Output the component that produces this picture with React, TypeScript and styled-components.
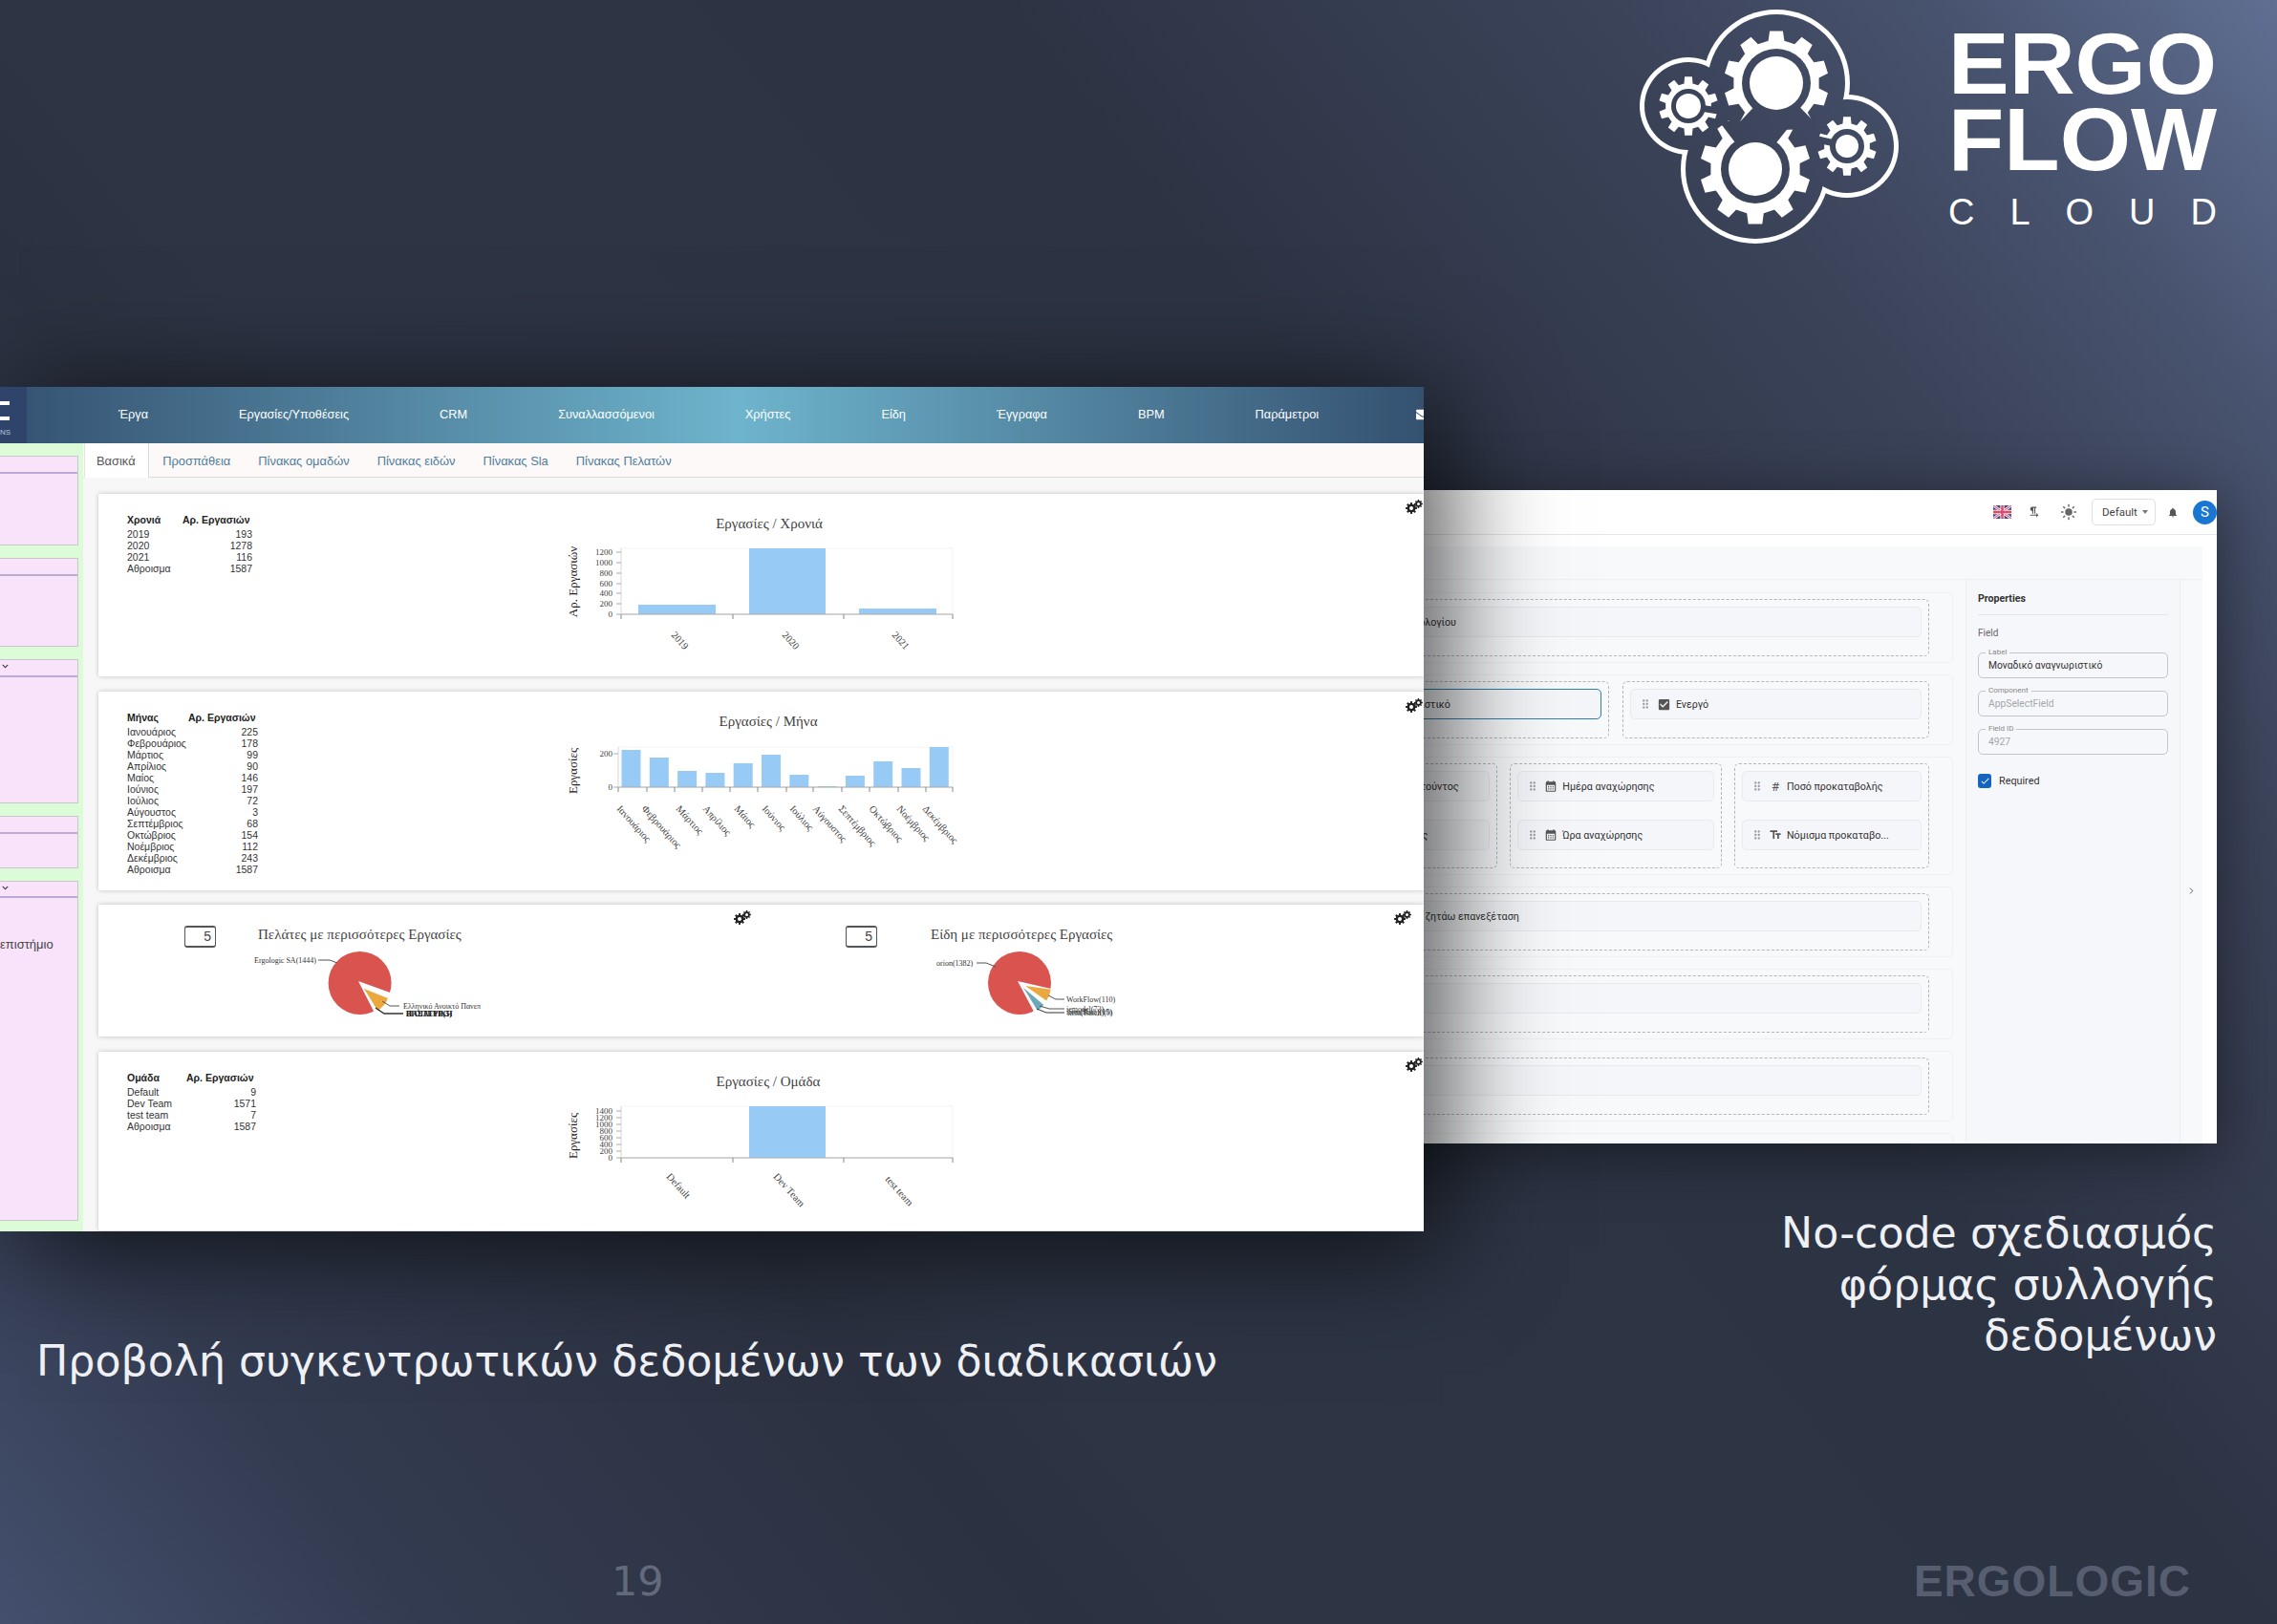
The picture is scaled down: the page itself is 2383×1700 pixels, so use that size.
import React, { FC } from 'react';
import styled, { createGlobalStyle } from 'styled-components';
import { ChevronRight, Sun } from 'lucide-react';
import { FaChevronDown, FaEnvelope } from 'react-icons/fa';
import {
  MdCalendarMonth,
  MdCheck,
  MdCheckBox,
  MdDragIndicator,
  MdFormatTextdirectionLToR,
  MdNotifications,
  MdTextFields,
} from 'react-icons/md';

const Global = createGlobalStyle`
  html, body { margin: 0; padding: 0; background: #2a3040; }
  * { box-sizing: border-box; }
`;

const gearPath = (cx: number, cy: number, outer: number, root: number, teeth: number) => {
  const step = (Math.PI * 2) / teeth;
  const pts: string[] = [];
  for (let i = 0; i < teeth; i++) {
    const a = i * step - Math.PI / 2;
    const at = (r: number, d: number) =>
      `${(cx + r * Math.cos(a + d * step)).toFixed(1)} ${(cy + r * Math.sin(a + d * step)).toFixed(1)}`;
    pts.push(at(root, -0.3), at(outer, -0.2), at(outer, 0.2), at(root, 0.3));
  }
  return `M${pts.join('L')}Z`;
};

const wedge = (cx: number, cy: number, r: number, a0: number, a1: number) => {
  const p = (a: number) =>
    `${(cx + r * Math.cos((a * Math.PI) / 180)).toFixed(1)} ${(cy + r * Math.sin((a * Math.PI) / 180)).toFixed(1)}`;
  return `M${cx} ${cy}L${p(a0)}A${r} ${r} 0 0 1 ${p(a1)}Z`;
};

const BLOBS = [
  { x: 179, y: 87, r: 77 },
  { x: 157, y: 177, r: 78 },
  { x: 87, y: 111, r: 51 },
  { x: 253, y: 153, r: 54 },
];

const Logo: FC = () => (
  <LogoSvg viewBox="0 0 640 270">
    <defs>
      <mask id="ring">
        {BLOBS.map((b) => (
          <circle key={b.x} cx={b.x} cy={b.y} r={b.r} fill="#fff" />
        ))}
        {BLOBS.map((b) => (
          <circle key={b.x} cx={b.x} cy={b.y} r={b.r - 5} fill="#000" />
        ))}
      </mask>
      <mask id="gears">
        <rect width="640" height="270" fill="#000" />
        <path d={gearPath(179, 87, 55, 45, 10)} fill="#fff" />
        <path d={gearPath(157, 177, 58, 47, 10)} fill="#fff" />
        <path d={gearPath(87, 111, 31, 24, 10)} fill="#fff" />
        <path d={gearPath(253, 153, 31, 24, 10)} fill="#fff" />
        <circle cx="179" cy="87" r="36" fill="#000" />
        <circle cx="157" cy="177" r="36" fill="#000" />
        <circle cx="87" cy="111" r="18" fill="#000" />
        <circle cx="253" cy="153" r="18" fill="#000" />
        <polygon points="179,87 132,137 226,135" fill="#000" />
        <polygon points="157,177 119,127 197,127" fill="#000" />
        <line x1="87" y1="111" x2="130" y2="118" stroke="#000" strokeWidth="7" />
        <line x1="253" y1="153" x2="205" y2="142" stroke="#000" strokeWidth="7" />
      </mask>
    </defs>
    <rect width="640" height="270" fill="#fff" mask="url(#ring)" />
    <rect width="640" height="270" fill="#fff" mask="url(#gears)" />
    <circle cx="179" cy="87" r="28" fill="#fff" />
    <circle cx="157" cy="177" r="28" fill="#fff" />
    <circle cx="87" cy="111" r="13" fill="#fff" />
    <circle cx="253" cy="153" r="12" fill="#fff" />
    <LogoWord x="359" y="98" fontSize="91" textLength="281" lengthAdjust="spacingAndGlyphs">
      ERGO
    </LogoWord>
    <LogoWord x="359" y="178" fontSize="93" textLength="281" lengthAdjust="spacingAndGlyphs">
      FLOW
    </LogoWord>
    <LogoSub x="359" y="235" fontSize="38" textLength="281" lengthAdjust="spacing">
      CLOUD
    </LogoSub>
  </LogoSvg>
);

interface IChart {
  top: number;
  height: number;
  title: string;
  titleX: number;
  titleY: number;
  axisLabel: string;
  axisLabelY: number;
  plotTop: number;
  plotBottom: number;
  plotLeft: number;
  yTicks: { text: string; y: number }[];
  xTicks: number[];
  bars: { x: number; w: number; top: number }[];
  xLabels: { text: string; x: number; y: number }[];
}

const Chart: FC<{ data: IChart }> = ({ data }) => (
  <ChartSvg
    width={460}
    height={data.height}
    viewBox={`580 ${data.top} 460 ${data.height}`}
  >
    <ChartTitle x={data.titleX} y={data.titleY} textAnchor="middle">
      {data.title}
    </ChartTitle>
    <AxisTitle
      x={600}
      y={data.axisLabelY}
      textAnchor="middle"
      transform={`rotate(-90 604 ${data.axisLabelY})`}
    >
      {data.axisLabel}
    </AxisTitle>
    <rect
      x={data.plotLeft}
      y={data.plotTop}
      width={997 - data.plotLeft}
      height={data.plotBottom - data.plotTop}
      fill="#fff"
      stroke="#f3f3f3"
    />
    {data.bars.map((b) => (
      <rect key={b.x} x={b.x} y={b.top} width={b.w} height={data.plotBottom - b.top} fill="#97cbf5" />
    ))}
    <line x1={data.plotLeft} y1={data.plotBottom} x2={997} y2={data.plotBottom} stroke="#aaa" />
    <line x1={data.plotLeft} y1={data.plotTop} x2={data.plotLeft} y2={data.plotBottom} stroke="#ddd" />
    {data.xTicks.map((x) => (
      <line key={x} x1={x} y1={data.plotBottom} x2={x} y2={data.plotBottom + 5} stroke="#888" />
    ))}
    {data.yTicks.map((t) => (
      <g key={t.text}>
        <line x1={data.plotLeft - 5} y1={t.y} x2={data.plotLeft} y2={t.y} stroke="#aaa" />
        <TickText x={641} y={t.y + 3} textAnchor="end">
          {t.text}
        </TickText>
      </g>
    ))}
    {data.xLabels.map((l) => (
      <TickLabel key={l.text} x={l.x} y={l.y} transform={`rotate(48 ${l.x} ${l.y})`}>
        {l.text}
      </TickLabel>
    ))}
  </ChartSvg>
);

const MONTH_TOPS = [784, 792, 806, 808, 798, 789, 810, 822, 811, 796, 803, 781];
const MONTH_NAMES = [
  ['Ιανουάριος', 645],
  ['Φεβρουάριος', 671],
  ['Μάρτιος', 707],
  ['Απρίλιος', 735],
  ['Μάιος', 768],
  ['Ιούνιος', 797],
  ['Ιούλιος', 826],
  ['Αύγουστος', 850],
  ['Σεπτέμβριος', 877],
  ['Οκτώβριος', 909],
  ['Νοέμβριος', 938],
  ['Δεκέμβριος', 965],
] as const;

const yearChart: IChart = {
  top: 517,
  height: 191,
  title: 'Εργασίες / Χρονιά',
  titleX: 805,
  titleY: 553,
  axisLabel: 'Αρ. Εργασιών',
  axisLabelY: 605,
  plotTop: 574,
  plotBottom: 643,
  plotLeft: 650,
  yTicks: [
    { text: '1200', y: 578 },
    { text: '1000', y: 589 },
    { text: '800', y: 600 },
    { text: '600', y: 611 },
    { text: '400', y: 621 },
    { text: '200', y: 632 },
    { text: '0', y: 643 },
  ],
  xTicks: [650, 767, 883, 997],
  bars: [
    { x: 668, w: 81, top: 633 },
    { x: 784, w: 80, top: 574 },
    { x: 899, w: 81, top: 637 },
  ],
  xLabels: [
    { text: '2019', x: 702, y: 665 },
    { text: '2020', x: 818, y: 665 },
    { text: '2021', x: 933, y: 665 },
  ],
};

const monthChart: IChart = {
  top: 723,
  height: 208,
  title: 'Εργασίες / Μήνα',
  titleX: 804,
  titleY: 759,
  axisLabel: 'Εργασίες',
  axisLabelY: 802,
  plotTop: 781,
  plotBottom: 823,
  plotLeft: 647,
  yTicks: [
    { text: '200', y: 788 },
    { text: '0', y: 823 },
  ],
  xTicks: [647, 677, 706, 735, 764, 793, 823, 851, 881, 910, 940, 969, 997],
  bars: MONTH_TOPS.map((t, i) => ({ x: 650.5 + i * 29.3, w: 20, top: t })),
  xLabels: MONTH_NAMES.map(([text, x]) => ({ text, x, y: 846 })),
};

const teamChart: IChart = {
  top: 1101,
  height: 187,
  title: 'Εργασίες / Ομάδα',
  titleX: 804,
  titleY: 1137,
  axisLabel: 'Εργασίες',
  axisLabelY: 1185,
  plotTop: 1158,
  plotBottom: 1212,
  plotLeft: 650,
  yTicks: ['1400', '1200', '1000', '800', '600', '400', '200', '0'].map((text, i) => ({
    text,
    y: 1163 + i * 7,
  })),
  xTicks: [650, 767, 883, 997],
  bars: [{ x: 784, w: 80, top: 1158 }],
  xLabels: [
    { text: 'Default', x: 697, y: 1232 },
    { text: 'Dev Team', x: 809, y: 1232 },
    { text: 'test team', x: 926, y: 1235 },
  ],
};

const Gears: FC<{ $left: number; $top: number }> = ({ $left, $top }) => (
  <GearsIcon $left={$left} $top={$top} viewBox="0 0 18 15">
    <path d={gearPath(6, 9, 6, 4.4, 8)} fill="#222" />
    <circle cx="6" cy="9" r="2" fill="#fff" />
    <path d={gearPath(13.5, 4.5, 4.5, 3.3, 8)} fill="#222" />
    <circle cx="13.5" cy="4.5" r="1.5" fill="#fff" />
  </GearsIcon>
);

const StatTable: FC<{ head: string; first: number; rows: [string, string][] }> = ({ head, first, rows }) => (
  <Table>
    <thead>
      <tr>
        <Th $w={first}>{head}</Th>
        <Th $w={73}>Αρ. Εργασιών</Th>
      </tr>
    </thead>
    <tbody>
      {rows.map(([a, b]) => (
        <tr key={a}>
          <Td>{a}</Td>
          <TdNum>{b}</TdNum>
        </tr>
      ))}
    </tbody>
  </Table>
);

const Handle = () => (
  <HandleBox>
    <MdDragIndicator size={14} />
  </HandleBox>
);

export default function App() {
  return (
    <Slide>
      <Global />
      <Header>
        <Logo />
      </Header>
      <Showcase>
        <LeftColumn>
          <DashboardWindow>
            <NavBar>
              <Brand>
                <BrandBar />
                <BrandBar />
                <BrandSub>NS</BrandSub>
              </Brand>
              <NavItems>
                {['Έργα', 'Εργασίες/Υποθέσεις', 'CRM', 'Συναλλασσόμενοι', 'Χρήστες', 'Είδη', 'Έγγραφα', 'BPM', 'Παράμετροι'].map(
                  (t) => (
                    <NavItem key={t}>{t}</NavItem>
                  ),
                )}
                <NavMail>
                  <FaEnvelope size={14} />
                </NavMail>
              </NavItems>
            </NavBar>
            <DashBody>
              <Sidebar>
                <SidePanel $h={94} $head={16} />
                <SidePanel $h={93} $head={16} />
                <SidePanel $h={151} $head={16}>
                  <SideChevron>
                    <FaChevronDown size={7} />
                  </SideChevron>
                </SidePanel>
                <SidePanel $h={55} $head={16} />
                <SidePanel $h={356} $head={15}>
                  <SideChevron>
                    <FaChevronDown size={7} />
                  </SideChevron>
                  <SideText>επιστήμιο</SideText>
                </SidePanel>
              </Sidebar>
              <DashMain>
                <Tabs>
                  <Tab $active>Βασικά</Tab>
                  <Tab>Προσπάθεια</Tab>
                  <Tab>Πίνακας ομαδών</Tab>
                  <Tab>Πίνακας ειδών</Tab>
                  <Tab>Πίνακας Sla</Tab>
                  <Tab>Πίνακας Πελατών</Tab>
                </Tabs>
                <Cards>
                  <Card $h={191}>
                    <TableCell>
                      <StatTable
                        head="Χρονιά"
                        first={58}
                        rows={[
                          ['2019', '193'],
                          ['2020', '1278'],
                          ['2021', '116'],
                          ['Αθροισμα', '1587'],
                        ]}
                      />
                    </TableCell>
                    <Chart data={yearChart} />
                    <Gears $left={1368} $top={6} />
                  </Card>
                  <Card $h={208}>
                    <TableCell>
                      <StatTable
                        head="Μήνας"
                        first={64}
                        rows={[
                          ['Ιανουάριος', '225'],
                          ['Φεβρουάριος', '178'],
                          ['Μάρτιος', '99'],
                          ['Απρίλιος', '90'],
                          ['Μαίος', '146'],
                          ['Ιούνιος', '197'],
                          ['Ιούλιος', '72'],
                          ['Αύγουστος', '3'],
                          ['Σεπτέμβριος', '68'],
                          ['Οκτώβριος', '154'],
                          ['Νοέμβριος', '112'],
                          ['Δεκέμβριος', '243'],
                          ['Αθροισμα', '1587'],
                        ]}
                      />
                    </TableCell>
                    <Chart data={monthChart} />
                    <Gears $left={1368} $top={7} />
                  </Card>
                  <PieCard>
                    <CountBox $ml={90}>5</CountBox>
                    <PieSvg $ml={14} width={320} height={138} viewBox="240 947 320 138">
                      <PieTitle x={270} y={983}>
                        Πελάτες με περισσότερες Εργασίες
                      </PieTitle>
                      <circle cx={376.6} cy={1029} r={33} fill="#d9534f" />
                      <path d={wedge(375, 1027, 36, 20, 63)} fill="#fff" />
                      <path d={wedge(381, 1035, 27, 22, 58)} fill="#eaa83f" />
                      <path d="M333 1005 L345 1005 L353 1008" fill="none" stroke="#555" />
                      <PieLabel x={266} y={1008}>
                        Ergologic SA(1444)
                      </PieLabel>
                      <path d="M400 1048 L408 1053 L418 1053" fill="none" stroke="#555" />
                      <PieLabel x={422} y={1056}>
                        Ελληνικό Ανοικτό Πανεπ
                      </PieLabel>
                      <path d="M393 1055 L402 1061 L422 1061" fill="none" stroke="#333" strokeWidth="1.4" />
                      <PieLabelDense x={425} y={1064}>
                        ΠΑΣΤΕΥΡ(5)
                      </PieLabelDense>
                      <PieLabelDense x={425} y={1064}>
                        ΒΙΟΙΑΤΡΙΚΗ
                      </PieLabelDense>
                    </PieSvg>
                    <CountBox $ml={325}>5</CountBox>
                    <PieSvg $ml={22} width={320} height={138} viewBox="940 947 320 138">
                      <PieTitle x={974} y={983}>
                        Είδη με περισσότερες Εργασίες
                      </PieTitle>
                      <circle cx={1067} cy={1029} r={33} fill="#d9534f" />
                      <path d={wedge(1065, 1027, 38, 13, 62)} fill="#fff" />
                      <path d={wedge(1073, 1032, 27, 8, 35)} fill="#eaa83f" />
                      <path d={wedge(1071, 1034, 28, 40, 58)} fill="#6fa8b8" />
                      <path d="M1022 1008 L1032 1008 L1042 1012" fill="none" stroke="#555" />
                      <PieLabel x={980} y={1011}>
                        orion(1382)
                      </PieLabel>
                      <path d="M1097 1042 L1105 1046 L1114 1046" fill="none" stroke="#555" />
                      <PieLabel x={1116} y={1049}>
                        WorkFlow(110)
                      </PieLabel>
                      <path d="M1088 1053 L1098 1056 L1114 1056" fill="none" stroke="#555" />
                      <path d="M1085 1056 L1095 1060 L1114 1060" fill="none" stroke="#333" />
                      <PieLabel x={1116} y={1059}>
                        iemodel(73)
                      </PieLabel>
                      <PieLabel x={1116} y={1062}>
                        item(Bath)(15)
                      </PieLabel>
                      <PieLabel x={1117} y={1063}>
                        item(Batch)(9)
                      </PieLabel>
                    </PieSvg>
                    <Gears $left={665} $top={6} />
                    <Gears $left={1356} $top={6} />
                  </PieCard>
                  <Card $h={187}>
                    <TableCell>
                      <StatTable
                        head="Ομάδα"
                        first={62}
                        rows={[
                          ['Default', '9'],
                          ['Dev Team', '1571'],
                          ['test team', '7'],
                          ['Αθροισμα', '1587'],
                        ]}
                      />
                    </TableCell>
                    <Chart data={teamChart} />
                    <Gears $left={1368} $top={6} />
                  </Card>
                </Cards>
              </DashMain>
            </DashBody>
          </DashboardWindow>
          <LeftCaption>Προβολή συγκεντρωτικών δεδομένων των διαδικασιών</LeftCaption>
        </LeftColumn>
        <RightColumn>
          <BuilderWindow>
            <TopBar>
              <FlagSvg viewBox="0 0 19 14">
                <rect width="19" height="14" rx="2" fill="#3f4a8c" />
                <path d="M0 0L19 14M19 0L0 14" stroke="#f0dde4" strokeWidth="3" />
                <path d="M0 0L19 14M19 0L0 14" stroke="#d9506e" strokeWidth="1" />
                <path d="M9.5 0V14M0 7H19" stroke="#f0dde4" strokeWidth="4.5" />
                <path d="M9.5 0V14M0 7H19" stroke="#d9506e" strokeWidth="2.5" />
              </FlagSvg>
              <TopIcon $w={13} $ml={17}>
                <MdFormatTextdirectionLToR size={22} />
              </TopIcon>
              <TopIcon $w={18} $ml={21}>
                <Sun size={18} fill="#666" color="#666" strokeWidth={2} />
              </TopIcon>
              <Select>
                Default <SelectCaret />
              </Select>
              <TopIcon $w={12} $ml={12}>
                <MdNotifications size={19} />
              </TopIcon>
              <Avatar>S</Avatar>
            </TopBar>
            <Workspace>
              <WorkspaceHead />
              <WorkspaceBody>
                <Form>
                  <FormRow>
                    <DropZone>
                      <Chip $inset={111}>Αριθμός τιμολογίου</Chip>
                    </DropZone>
                  </FormRow>
                  <FormRow>
                    <DropZone>
                      <Chip $inset={78} $selected>
                        Μοναδικό αναγνωριστικό
                      </Chip>
                    </DropZone>
                    <DropZone $w={320.6}>
                      <Chip>
                        <Handle />
                        <MdCheckBox size={15} color="#555" />
                        Ενεργό
                      </Chip>
                    </DropZone>
                  </FormRow>
                  <FormRow $gap={13}>
                    <DropZone>
                      <Chip $inset={128}>Όνομα αιτούντος</Chip>
                      <Chip $inset={119}>Προορισμός</Chip>
                    </DropZone>
                    <DropZone $w={221.6}>
                      <Chip>
                        <Handle />
                        <MdCalendarMonth size={14} color="#555" />
                        Ημέρα αναχώρησης
                      </Chip>
                      <Chip>
                        <Handle />
                        <MdCalendarMonth size={14} color="#555" />
                        Ώρα αναχώρησης
                      </Chip>
                    </DropZone>
                    <DropZone $w={203.6}>
                      <Chip>
                        <Handle />
                        <ChipGlyph>#</ChipGlyph>
                        Ποσό προκαταβολής
                      </Chip>
                      <Chip>
                        <Handle />
                        <MdTextFields size={14} color="#555" />
                        Νόμισμα προκαταβο...
                      </Chip>
                    </DropZone>
                  </FormRow>
                  <FormRow>
                    <DropZone>
                      <Chip $inset={114}>Για το οποίο ζητάω επανεξέταση</Chip>
                    </DropZone>
                  </FormRow>
                  <FormRow>
                    <DropZone>
                      <Chip />
                    </DropZone>
                  </FormRow>
                  <FormRow>
                    <DropZone>
                      <Chip />
                    </DropZone>
                  </FormRow>
                  <FormRow />
                </Form>
                <Properties>
                  <PropTitle>Properties</PropTitle>
                  <PropGroup>Field</PropGroup>
                  <PropInput $label="Label">Μοναδικό αναγνωριστικό</PropInput>
                  <PropInput $label="Component" $disabled>
                    AppSelectField
                  </PropInput>
                  <PropInput $label="Field ID" $disabled>
                    4927
                  </PropInput>
                  <Required>
                    <RequiredBox>
                      <MdCheck size={11} color="#fff" />
                    </RequiredBox>
                    Required
                  </Required>
                </Properties>
                <Collapse>
                  <ChevronRight size={11} color="#555" />
                </Collapse>
              </WorkspaceBody>
            </Workspace>
          </BuilderWindow>
          <RightCaption>
            No-code σχεδιασμός
            <br />
            φόρμας συλλογής
            <br />
            δεδομένων
          </RightCaption>
        </RightColumn>
      </Showcase>
      <Footer>
        <PageNumber>19</PageNumber>
        <Company>ERGOLOGIC</Company>
      </Footer>
    </Slide>
  );
}

const SANS = `"Liberation Sans", Arial, sans-serif`;
const SERIF = `"Liberation Serif", "Times New Roman", serif`;
const SLIDE_FONT = `"DejaVu Sans", Verdana, sans-serif`;

const Slide = styled.div`
  width: 2383px;
  height: 1700px;
  overflow: hidden;
  display: flex;
  flex-direction: column;
  background: linear-gradient(
    52deg,
    #434f6d 0%,
    #333b50 12%,
    #2b3140 30%,
    #2d3444 36%,
    #2c3343 64%,
    #3b4359 81%,
    #48536f 90.5%,
    #606f92 100%
  );
  font-family: ${SANS};
`;

const Header = styled.header`
  height: 405px;
  flex: none;
  display: flex;
  justify-content: flex-end;
  padding-right: 63px;
`;

const LogoSvg = styled.svg`
  width: 640px;
  height: 270px;
  display: block;
`;

const LogoWord = styled.text`
  font-family: ${SANS};
  font-weight: 700;
  fill: #fff;
`;

const LogoSub = styled.text`
  font-family: ${SANS};
  fill: #fff;
`;

const Showcase = styled.main`
  flex: 1;
  display: flex;
  min-height: 0;
`;

const LeftColumn = styled.section`
  width: 1490px;
  flex: none;
  position: relative;
  z-index: 2;
`;

const RightColumn = styled.section`
  margin-left: -200px;
  width: 1030px;
  flex: none;
  padding-top: 108px;
`;

const DashboardWindow = styled.div`
  width: 1490px;
  height: 884px;
  overflow: hidden;
  background: #f7f7f7;
  box-shadow: 20px 16px 110px rgba(0, 0, 0, 0.72);
`;

const LeftCaption = styled.div`
  margin-top: 109px;
  padding-left: 38px;
  font: 44.27px/53px ${SLIDE_FONT};
  color: #eef0f4;
  white-space: nowrap;
`;

const RightCaption = styled.div`
  margin-top: 67px;
  text-align: right;
  font: 44.27px/53.5px ${SLIDE_FONT};
  color: #eef0f4;
`;

const NavBar = styled.nav`
  height: 59px;
  display: flex;
  background: linear-gradient(90deg, #345170 0%, #6eb4cc 52%, #345170 100%);
`;

const Brand = styled.div`
  width: 28px;
  flex: none;
  display: flex;
  flex-direction: column;
  gap: 12px;
  padding-top: 15px;
  background: #2e446b;
  position: relative;
`;

const BrandBar = styled.div`
  width: 10px;
  height: 4px;
  background: #fff;
`;

const BrandSub = styled.span`
  position: absolute;
  top: 43px;
  left: 0;
  font-size: 8px;
  color: #b9c6d8;
`;

const NavItems = styled.div`
  flex: 1;
  min-width: 0;
  display: flex;
  align-items: center;
  gap: 95px;
  padding-left: 96px;
  padding-bottom: 2px;
  overflow: hidden;
`;

const NavItem = styled.span`
  flex: none;
  font-size: 12.75px;
  color: #fff;
  white-space: nowrap;
`;

const NavMail = styled.span`
  flex: none;
  color: #fff;
  display: flex;
  margin-left: 7px;
`;

const DashBody = styled.div`
  display: flex;
  height: 825px;
`;

const Sidebar = styled.aside`
  width: 87px;
  flex: none;
  display: flex;
  flex-direction: column;
  gap: 13px;
  padding: 13px 5.5px 0 0;
  background: #dcfcd8;
`;

const SidePanel = styled.div<{ $h: number; $head: number }>`
  height: ${(p) => p.$h}px;
  flex: none;
  position: relative;
  background: linear-gradient(#bcaad8, #bcaad8) 0 ${(p) => p.$head}px / 100% 2px no-repeat, #f8e3fb;
  border: 1px solid #c6c6cc;
  border-left: 0;
`;

const SideChevron = styled.span`
  position: absolute;
  left: 2px;
  top: 3px;
  display: flex;
  color: #333;
`;

const SideText = styled.div`
  position: absolute;
  top: 58px;
  left: 0;
  font-size: 13px;
  color: #444;
`;

const DashMain = styled.div`
  flex: 1;
  min-width: 0;
`;

const Tabs = styled.div`
  height: 36px;
  display: flex;
  padding-left: 1px;
  background: #fdf9f8;
  border-bottom: 1px solid #dcdcdc;
`;

const Tab = styled.div<{ $active?: boolean }>`
  height: 36px;
  display: flex;
  align-items: center;
  padding: 1px ${(p) => (p.$active ? '13px 0 12px' : '14.5px 0')};
  font-size: 12.9px;
  color: ${(p) => (p.$active ? '#555' : '#4f7d9b')};
  background: ${(p) => (p.$active ? '#fff' : 'transparent')};
  border-left: ${(p) => (p.$active ? '1px solid #e4e4e4' : '0')};
  border-right: ${(p) => (p.$active ? '1px solid #dcdcdc' : '0')};
  white-space: nowrap;
`;

const Cards = styled.div`
  display: flex;
  flex-direction: column;
  gap: 15.5px;
  padding: 17px 0 0 16px;
`;

const Card = styled.div<{ $h: number }>`
  height: ${(p) => p.$h}px;
  flex: none;
  position: relative;
  display: grid;
  grid-template-columns: 477px 460px;
  background: #fff;
  border-radius: 2px 0 0 2px;
  box-shadow: 0 0 5px rgba(0, 0, 0, 0.22);
`;

const PieCard = styled.div`
  height: 138px;
  flex: none;
  position: relative;
  display: flex;
  align-items: flex-start;
  background: #fff;
  box-shadow: 0 0 5px rgba(0, 0, 0, 0.22);
`;

const TableCell = styled.div`
  padding: 21px 0 0 30px;
`;

const Table = styled.table`
  table-layout: fixed;
  border-collapse: collapse;
  font-size: 10.5px;
  line-height: 12px;
  color: #333;
`;

const Th = styled.th<{ $w: number }>`
  width: ${(p) => p.$w}px;
  height: 15px;
  padding: 0 0 3px;
  text-align: left;
  font-weight: 700;
  color: #222;
  white-space: nowrap;
`;

const Td = styled.td`
  padding: 0;
  white-space: nowrap;
`;

const TdNum = styled(Td)`
  text-align: right;
`;

const ChartSvg = styled.svg`
  display: block;
`;

const ChartTitle = styled.text`
  font: 15px ${SERIF};
  fill: #444;
`;

const AxisTitle = styled.text`
  font: 13px ${SERIF};
  fill: #222;
`;

const TickText = styled.text`
  font: 9px ${SERIF};
  fill: #444;
`;

const TickLabel = styled.text`
  font: 10.5px ${SERIF};
  fill: #444;
`;

const GearsIcon = styled.svg<{ $left: number; $top: number }>`
  position: absolute;
  left: ${(p) => p.$left}px;
  top: ${(p) => p.$top}px;
  width: 18px;
  height: 15px;
`;

const CountBox = styled.div<{ $ml: number }>`
  flex: none;
  width: 33px;
  height: 23px;
  margin: 22px 0 0 ${(p) => p.$ml}px;
  padding-right: 4px;
  border: 1px solid #555;
  border-top-width: 2px;
  border-bottom-width: 2px;
  border-radius: 3px;
  font-size: 14px;
  line-height: 19px;
  text-align: right;
  color: #444;
`;

const PieSvg = styled.svg<{ $ml: number }>`
  flex: none;
  display: block;
  margin-left: ${(p) => p.$ml}px;
`;

const PieTitle = styled.text`
  font: 15px ${SERIF};
  fill: #444;
`;

const PieLabel = styled.text`
  font: 8px ${SERIF};
  fill: #333;
`;

const PieLabelDense = styled.text`
  font: 700 8px ${SERIF};
  fill: #222;
`;

const BuilderWindow = styled.div`
  width: 1030px;
  height: 684px;
  overflow: hidden;
  background: #fff;
  box-shadow: 0 10px 60px rgba(0, 0, 0, 0.45);
`;

const TopBar = styled.div`
  height: 47px;
  display: flex;
  justify-content: flex-end;
  align-items: center;
  border-bottom: 1px solid #e6e6e6;
`;

const FlagSvg = styled.svg`
  width: 19px;
  height: 14px;
`;

const TopIcon = styled.span<{ $w: number; $ml: number }>`
  width: ${(p) => p.$w}px;
  margin-left: ${(p) => p.$ml}px;
  display: flex;
  justify-content: center;
  color: #555;
`;

const Select = styled.div`
  width: 67px;
  height: 28px;
  margin-left: 15px;
  display: flex;
  align-items: center;
  gap: 5px;
  padding-left: 10px;
  border: 1px solid #e0e0e0;
  border-radius: 5px;
  font: 11.5px Roboto, sans-serif;
  color: #444;
`;

const SelectCaret = styled.span`
  width: 0;
  height: 0;
  border: 3px solid transparent;
  border-top: 4px solid #777;
  margin-top: 3px;
`;

const Avatar = styled.div`
  width: 25px;
  height: 25px;
  margin-left: 15px;
  border-radius: 50%;
  display: flex;
  align-items: center;
  justify-content: center;
  background: #1976d2;
  color: #fff;
  font: 15px Roboto, sans-serif;
`;

const Workspace = styled.div`
  margin: 12px 15px 0 0;
  background: #f8f9fb;
`;

const WorkspaceHead = styled.div`
  height: 35px;
  border-bottom: 1px solid #eceef1;
`;

const WorkspaceBody = styled.div`
  display: flex;
  height: 590px;
`;

const Form = styled.div`
  width: 767px;
  flex: none;
  display: flex;
  flex-direction: column;
  gap: 12px;
  padding: 13px 13.5px 0 10px;
  overflow: hidden;
`;

const FormRow = styled.div<{ $gap?: number }>`
  flex: none;
  min-height: 74px;
  display: flex;
  gap: ${(p) => p.$gap ?? 14}px;
  padding: 6px 24px 6px 6px;
  border: 1px solid #eef0f3;
  border-radius: 5px;
`;

const DropZone = styled.div<{ $w?: number }>`
  ${(p) => (p.$w ? `width: ${p.$w}px; flex: none;` : 'flex: 1; min-width: 0;')}
  display: flex;
  flex-direction: column;
  gap: 19px;
  padding: 7px 7px 18px;
  border: 1px dashed #b4b6bc;
  border-radius: 5px;
`;

const Chip = styled.div<{ $inset?: number; $selected?: boolean }>`
  height: 32px;
  flex: none;
  display: flex;
  align-items: center;
  gap: 5px;
  padding-left: ${(p) => p.$inset ?? 8}px;
  border: 1px solid ${(p) => (p.$selected ? '#2f7fb0' : '#e8eaee')};
  border-radius: 5px;
  background: #f5f6f9;
  font: 10.7px Roboto, sans-serif;
  color: #333;
  white-space: nowrap;
  overflow: hidden;
`;

const HandleBox = styled.span`
  display: flex;
  color: #9a9da3;
`;

const ChipGlyph = styled.span`
  width: 14px;
  font-size: 13px;
  text-align: center;
  color: #555;
`;

const Properties = styled.div`
  width: 225px;
  flex: none;
  padding: 13px 12px;
  background: #f6f7fa;
  border-left: 1px solid #eceef1;
  border-right: 1px solid #eceef1;
  font-family: Roboto, sans-serif;
`;

const PropTitle = styled.div`
  padding-bottom: 9px;
  border-bottom: 1px solid #e2e4e8;
  font-size: 10.6px;
  line-height: 14px;
  font-weight: 700;
  color: #333;
`;

const PropGroup = styled.div`
  margin: 12px 0 13px;
  font-size: 10px;
  line-height: 14px;
  color: #666;
`;

const PropInputRoot = styled.div<{ $disabled?: boolean }>`
  position: relative;
  height: 27px;
  margin-bottom: 13px;
  display: flex;
  align-items: center;
  padding-left: 10px;
  border: 1px solid #c2c5cb;
  border-radius: 5px;
  font-size: 10.3px;
  color: ${(p) => (p.$disabled ? '#a4a7ad' : '#333')};
`;

const PropFloat = styled.span`
  position: absolute;
  left: 7px;
  top: -6px;
  padding: 0 3px;
  background: #f6f7fa;
  font-size: 8px;
  line-height: 10px;
  color: #888;
`;

const PropInput: FC<{ $label: string; $disabled?: boolean; children: React.ReactNode }> = ({
  $label,
  $disabled,
  children,
}) => (
  <PropInputRoot $disabled={$disabled}>
    <PropFloat>{$label}</PropFloat>
    {children}
  </PropInputRoot>
);

const Required = styled.div`
  margin-top: 20px;
  display: flex;
  align-items: center;
  gap: 8px;
  font-size: 10.8px;
  color: #333;
`;

const RequiredBox = styled.span`
  width: 14px;
  height: 15px;
  display: flex;
  align-items: center;
  justify-content: center;
  border-radius: 3px;
  background: #1565c0;
`;

const Collapse = styled.div`
  flex: 1;
  display: flex;
  justify-content: center;
  align-items: flex-start;
  padding-top: 320px;
`;

const Footer = styled.footer`
  height: 92px;
  flex: none;
  display: flex;
  align-items: flex-start;
  justify-content: space-between;
  padding: 21px 90px 0 640px;
`;

const PageNumber = styled.div`
  font: 43px/52px ${SLIDE_FONT};
  color: #626a7c;
`;

const Company = styled.div`
  font: 700 46px/52px ${SANS};
  letter-spacing: 1px;
  color: #565e70;
`;
